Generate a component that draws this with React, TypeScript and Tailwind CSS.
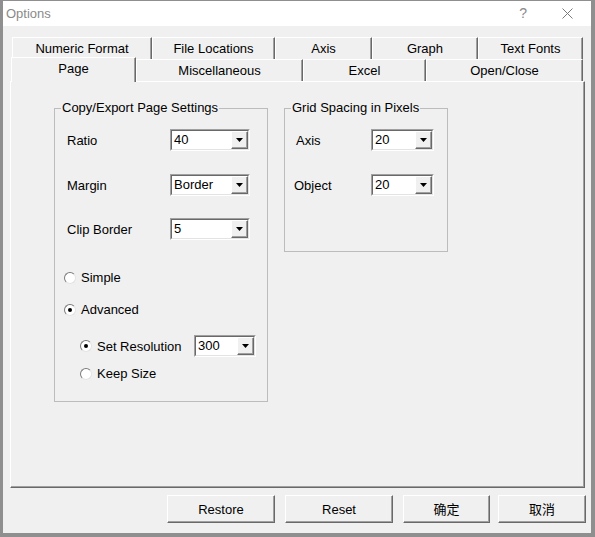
import type { ReactNode } from 'react';

const raised = 'border border-t-white border-l-white border-r-[#696969] border-b-[#696969] shadow-[inset_-1px_-1px_0_#a0a0a0]';

function Combo({ value, className }: { value: string; className: string }) {
  return (
    <div className={`flex h-[22px] border border-t-[#a0a0a0] border-l-[#a0a0a0] border-r-white border-b-white ${className}`}>
      <div className="flex flex-1 border border-t-[#696969] border-l-[#696969] border-r-[#e3e3e3] border-b-[#e3e3e3] bg-white">
        <span className="flex-1 pl-[2px] text-[13px] leading-[18px] text-black">{value}</span>
        <div className={`w-[17px] flex items-center justify-center bg-[#f0f0f0] ${raised}`}>
          <svg width="7" height="4" viewBox="0 0 7 4">
            <path d="M0 0h7L3.5 4z" fill="#000" />
          </svg>
        </div>
      </div>
    </div>
  );
}

function Radio({ checked }: { checked?: boolean }) {
  return (
    <span className="w-[12px] h-[12px] rounded-full border border-t-[#7a7a7a] border-l-[#7a7a7a] border-r-[#e3e3e3] border-b-[#e3e3e3] bg-white flex items-center justify-center shrink-0">
      {checked && <span className="w-[4px] h-[4px] rounded-full bg-black" />}
    </span>
  );
}

function Tab({ label, className }: { label: string; className: string }) {
  return (
    <div className={`flex items-center justify-center border-t border-l border-r border-t-white border-l-white border-r-[#696969] shadow-[inset_-1px_0_0_#a0a0a0] text-[13px] text-black ${className}`}>
      {label}
    </div>
  );
}

function Group({ title, className, children }: { title: string; className: string; children: ReactNode }) {
  return (
    <fieldset className={`border border-[#bcbcbc] ${className}`}>
      <legend className="ml-[6px] px-[1px] text-[13px] leading-[16px] text-black">{title}</legend>
      {children}
    </fieldset>
  );
}

function Button({ label, className }: { label: string; className: string }) {
  return (
    <button className={`h-[28px] pt-[1px] bg-[#f0f0f0] text-[13px] text-black ${raised} ${className}`}>{label}</button>
  );
}

export default function App() {
  return (
    <div className="w-[595px] h-[537px] flex flex-col bg-[#f0f0f0] border-t border-l-[3px] border-r-[4px] border-b-[4px] border-[#8f8f8f] font-['Liberation_Sans','Noto_Sans_CJK_SC',sans-serif] select-none">
      <div className="h-[25px] bg-white flex items-center">
        <span className="pl-[3px] text-[13px] text-[#8a8a8a]">Options</span>
        <span className="ml-auto text-[14px] text-[#8a8a8a]">?</span>
        <svg className="ml-[35px] mr-[18px]" width="11" height="11" viewBox="0 0 11 11">
          <path d="M0.5 0.5l10 10M10.5 0.5l-10 10" stroke="#7a7a7a" strokeWidth="1" />
        </svg>
      </div>

      <div className="flex-1 flex flex-col">
        <div className="mt-[11px] ml-[9px] flex h-[22px]">
          <Tab label="Numeric Format" className="w-[140px]" />
          <Tab label="File Locations" className="w-[123px]" />
          <Tab label="Axis" className="w-[97px]" />
          <Tab label="Graph" className="w-[106px]" />
          <Tab label="Text Fonts" className="w-[105px]" />
        </div>
        <div className="ml-[8px] flex items-end h-[22px]">
          <Tab label="Page" className="w-[125px] h-[25px] -mb-px relative z-10 bg-[#f0f0f0] pb-[3px]" />
          <Tab label="Miscellaneous" className="w-[167px] h-[22px] pt-[1px]" />
          <Tab label="Excel" className="w-[123px] h-[22px] pt-[1px]" />
          <Tab label="Open/Close" className="w-[157px] h-[22px] pt-[1px]" />
        </div>

        <div className="ml-[7px] w-[575px] h-[407px] flex items-start border border-t-white border-l-white border-r-[#696969] border-b-[#696969] shadow-[inset_-1px_-1px_0_#a0a0a0]">
          <Group title="Copy/Export Page Settings" className="ml-[43px] mt-[18px] w-[214px] h-[302px]">
            <div className="flex flex-col text-[13px] text-black">
              <div className="mt-[13px] pl-[12px] flex items-center h-[22px]">
                <span className="w-[103px] pt-[2px]">Ratio</span>
                <Combo value="40" className="w-[80px]" />
              </div>
              <div className="mt-[23px] pl-[12px] flex items-center h-[22px]">
                <span className="w-[103px] pt-[2px]">Margin</span>
                <Combo value="Border" className="w-[80px]" />
              </div>
              <div className="mt-[22px] pl-[12px] flex items-center h-[22px]">
                <span className="w-[103px] pt-[2px]">Clip Border</span>
                <Combo value="5" className="w-[80px]" />
              </div>
              <div className="mt-[30px] pl-[9px] flex items-center gap-[5px] h-[16px]">
                <Radio />
                <span>Simple</span>
              </div>
              <div className="mt-[16px] pl-[9px] flex items-center gap-[5px] h-[16px]">
                <Radio checked />
                <span>Advanced</span>
              </div>
              <div className="mt-[17px] pl-[25px] flex items-center gap-[5px] h-[22px]">
                <Radio checked />
                <span className="w-[97px] pt-[1px]">Set Resolution</span>
                <Combo value="300" className="w-[62px] -ml-[5px]" />
              </div>
              <div className="mt-[9px] pl-[25px] flex items-center gap-[5px] h-[16px]">
                <Radio />
                <span>Keep Size</span>
              </div>
            </div>
          </Group>

          <Group title="Grid Spacing in Pixels" className="ml-[16px] mt-[18px] w-[164px] h-[152px]">
            <div className="flex flex-col text-[13px] text-black">
              <div className="mt-[13px] pl-[11px] flex items-center h-[22px]">
                <span className="w-[75px] pt-[2px]">Axis</span>
                <Combo value="20" className="w-[63px]" />
              </div>
              <div className="mt-[23px] pl-[9px] flex items-center h-[22px]">
                <span className="w-[77px] pt-[2px]">Object</span>
                <Combo value="20" className="w-[63px]" />
              </div>
            </div>
          </Group>
        </div>

        <div className="mt-[7px] flex justify-end mr-[5px]">
          <Button label="Restore" className="w-[108px]" />
          <Button label="Reset" className="w-[108px] ml-[10px]" />
          <Button label="确定" className="w-[87px] ml-[10px]" />
          <Button label="取消" className="w-[88px] ml-[8px]" />
        </div>
      </div>
    </div>
  );
}
